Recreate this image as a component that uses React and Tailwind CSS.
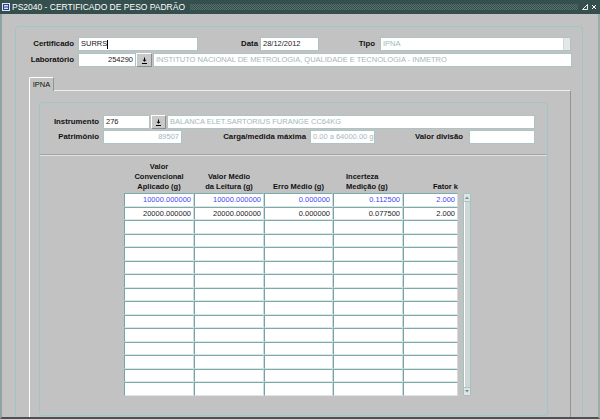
import clsx from "clsx";

function Label({ className, children }) {
  return (
    <span
      className={clsx(
        "shrink-0 text-right font-bold text-[7.8px] leading-none text-[#111] whitespace-nowrap",
        className
      )}
    >
      {children}
    </span>
  );
}

function Field({ className, children, right, muted, caret, combo }) {
  return (
    <div
      className={clsx(
        "h-[14px] shrink-0 bg-white border border-[#aec4c4] flex items-center overflow-hidden whitespace-nowrap text-[7.5px] leading-none",
        combo ? "pl-[2px]" : "px-[2px]",
        right && "justify-end",
        muted ? "text-[#a3b8b8]" : "text-[#1a1a1a]",
        className
      )}
    >
      <span className={clsx(combo && "flex-1")}>{children}</span>
      {caret && <span className="w-px h-[9px] bg-black" />}
      {combo && <span className="w-[7px] self-stretch bg-[#e3e7e7] border-l border-[#d0d8d8]" />}
    </div>
  );
}

function LovButton({ className }) {
  return (
    <div
      className={clsx(
        "h-[14px] shrink-0 flex items-center justify-center bg-[#c9c9c9] border border-t-white border-l-white border-b-[#8c8c8c] border-r-[#8c8c8c]",
        className
      )}
    >
      <svg width="7" height="7" viewBox="0 0 7 7">
        <path d="M3.5 0.5v3" stroke="#000" fill="none" />
        <path d="M1.5 2.8h4l-2 2z" fill="#000" />
        <path d="M1 6.5h5" stroke="#000" />
      </svg>
    </div>
  );
}

const filled = [
  ["10000.000000", "10000.000000", "0.000000", "0.112500", "2.000"],
  ["20000.000000", "20000.000000", "0.000000", "0.077500", "2.000"],
];

export default function App() {
  const rows = [...filled, ...Array.from({ length: 13 }, () => ["", "", "", "", ""])];

  return (
    <div className="w-[600px] h-[419px] flex flex-col bg-[#c2c2c2] overflow-hidden font-['Liberation_Sans',Arial,sans-serif] text-[#111]">
      {/* title bar */}
      <div className="h-[14px] shrink-0 bg-[#344f4d] flex items-center text-white">
        <svg className="ml-[2px] shrink-0" width="8" height="8" viewBox="0 0 8 8">
          <rect width="8" height="8" fill="#dfe6f5" />
          <rect x="1" y="1" width="6" height="6" fill="#2b3f92" />
          <path d="M2 2.5h4M2 5.5h4M3 2.5v3M5 2.5v3" stroke="#fff" strokeWidth="0.8" />
        </svg>
        <span className="ml-[2px] text-[8.5px] leading-none whitespace-nowrap">
          PS2040 - CERTIFICADO DE PESO PADRÃO
        </span>
        <div className="flex-1 ml-[5px] mr-[4px] h-[6px] bg-[repeating-conic-gradient(#55726f_0_25%,#344f4d_0_50%)] bg-size-[2px_2px]" />
        <svg className="shrink-0" width="6" height="6" viewBox="0 0 6 6">
          <path d="M0.5 5.5L5.5 0.5V5.5Z" stroke="#fff" fill="none" strokeWidth="0.9" />
        </svg>
        <svg className="ml-[3px] mr-[3px] shrink-0" width="6" height="6" viewBox="0 0 6 6">
          <path d="M1 1L5 5M5 1L1 5" stroke="#fff" strokeWidth="1" />
        </svg>
      </div>

      {/* window body */}
      <div className="flex-1 min-h-0 flex flex-col border-l-2 border-r-2 border-b-2 border-l-[#8fa4a2] border-r-[#9aaeac] border-b-[#3b5856]">
        <div className="ml-[13px] mt-[12px] w-[568px] flex-1 min-h-0 flex flex-col border border-b-0 border-[#a1c5c5] rounded-t-[4px]">
          <div className="pt-[10px] flex flex-col gap-[2px]">
            <div className="flex items-center h-[14px]">
              <Label className="w-[58px]">Certificado</Label>
              <Field className="ml-[4px] w-[120px]" caret>
                SURRS
              </Field>
              <Label className="w-[60px]">Data</Label>
              <Field className="ml-[2px] w-[59px]">28/12/2012</Field>
              <Label className="w-[56px]">Tipo</Label>
              <Field className="ml-[5px] w-[191px]" muted combo>
                IPNA
              </Field>
            </div>
            <div className="flex items-center h-[14px]">
              <Label className="w-[58px]">Laboratório</Label>
              <Field className="ml-[4px] w-[58px]" right>
                254290
              </Field>
              <LovButton className="w-[16px]" />
              <Field className="ml-[1px] w-[419px]" muted>
                INSTITUTO NACIONAL DE METROLOGIA, QUALIDADE E TECNOLOGIA - INMETRO
              </Field>
            </div>
          </div>

          {/* tab */}
          <div className="mt-[10px] ml-[13px] -mb-px relative z-10 w-[25px] h-[14px] flex items-center justify-center bg-[#c2c2c2] border border-b-0 border-t-white border-l-white border-r-[#8e9696] rounded-t-[2px] text-[7.5px] leading-none">
            IPNA
          </div>

          {/* tab page */}
          <div className="ml-[13px] w-[542px] flex-1 min-h-0 flex flex-col border-l border-t border-r border-l-white border-t-[#eeeeee] border-r-[#8e9696]">
            <div className="ml-[9px] mt-[11px] mb-[1px] w-[509px] flex-1 min-h-0 flex flex-col border border-[#a1c5c5] rounded-[3px]">
              <div className="pt-[12px] flex flex-col gap-px">
                <div className="flex items-center h-[14px]">
                  <Label className="w-[59px]">Instrumento</Label>
                  <Field className="ml-[4px] w-[47px]">276</Field>
                  <LovButton className="ml-[1px] w-[15px]" />
                  <Field className="ml-px w-[368px]" muted>
                    BALANCA ELET.SARTORIUS FURANGE CC64KG
                  </Field>
                </div>
                <div className="flex items-center h-[14px]">
                  <Label className="w-[59px]">Patrimônio</Label>
                  <Field className="ml-[4px] w-[79px]" right muted>
                    89507
                  </Field>
                  <Label className="w-[124px]">Carga/medida máxima</Label>
                  <Field className="ml-[4px] w-[65px]" muted>
                    0.00 a 64000.00 g
                  </Field>
                  <Label className="w-[88px]">Valor divisão</Label>
                  <Field className="ml-[6px] w-[66px]" />
                </div>
              </div>

              <div className="mt-[10px] h-px bg-[#9fa5a5]" />
              <div className="h-px bg-[#dfe3e3]" />

              {/* multi-record block */}
              <div className="ml-[84px] flex">
                <div className="grid grid-cols-[70px_70px_69px_70px_55px]">
                  <div className="h-[37px] flex flex-col items-center justify-end pb-px font-bold text-[7.5px] leading-[10px]">
                    <span>Valor</span>
                    <span>Convencional</span>
                    <span>Aplicado (g)</span>
                  </div>
                  <div className="h-[37px] flex flex-col items-center justify-end pb-px font-bold text-[7.5px] leading-[10px]">
                    <span>Valor Médio</span>
                    <span>da Leitura (g)</span>
                  </div>
                  <div className="h-[37px] flex flex-col items-center justify-end pb-px font-bold text-[7.5px] leading-[10px]">
                    <span>Erro Médio (g)</span>
                  </div>
                  <div className="h-[37px] flex flex-col items-start justify-end pl-[13px] pb-px font-bold text-[7.5px] leading-[10px]">
                    <span>Incerteza</span>
                    <span>Medição (g)</span>
                  </div>
                  <div className="h-[37px] flex flex-col items-end justify-end pb-px font-bold text-[7.5px] leading-[10px]">
                    <span>Fator k</span>
                  </div>
                  {rows.map((row, r) =>
                    row.map((v, c) => (
                      <div
                        key={r + "-" + c}
                        className={clsx(
                          "h-[13.5px] bg-white border-t border-l border-b border-r border-t-[#7aacac] border-l-[#6fa6a6] border-b-[#dde5e5] border-r-[#d2dada] flex items-center justify-end pr-[2px] text-[7.5px] leading-none",
                          r === 0 ? "text-[#4646f5]" : "text-[#222]"
                        )}
                      >
                        {v}
                      </div>
                    ))
                  )}
                </div>

                {/* scrollbar */}
                <div className="ml-[5px] mt-[37px] w-[8px] h-[203px] flex flex-col bg-[#cfd6d6] border border-[#9fc3c3] rounded-[2px]">
                  <div className="h-[8px] flex items-center justify-center bg-[#dfe4e4] border-b border-[#a9c4c4]">
                    <svg width="4" height="3" viewBox="0 0 4 3">
                      <path d="M0 3L2 0.5L4 3Z" fill="#7b8e8e" />
                    </svg>
                  </div>
                  <div className="flex-1 border-l border-white" />
                  <div className="h-[8px] flex items-center justify-center bg-[#dfe4e4] border-t border-[#a9c4c4]">
                    <svg width="4" height="3" viewBox="0 0 4 3">
                      <path d="M0 0L2 2.5L4 0Z" fill="#7b8e8e" />
                    </svg>
                  </div>
                </div>
              </div>
              <div className="flex-1" />
            </div>
          </div>
        </div>
      </div>
    </div>
  );
}
